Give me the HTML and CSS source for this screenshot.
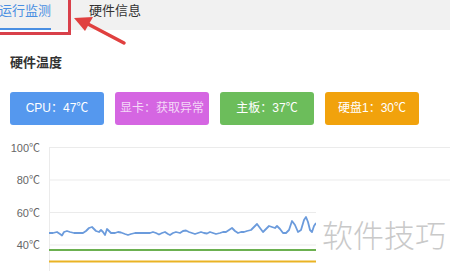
FILE: index.html
```html
<!DOCTYPE html>
<html lang="zh-CN">
<head>
    <meta charset="UTF-8">
    <meta name="viewport" content="width=device-width, initial-scale=1.0">
    <title>运行监测</title>
    <link rel="stylesheet" href="styles.css">
</head>
<body>
    <div class="page">
        <div class="tabs">
            <div class="tab active"><span>运行监测</span></div>
            <div class="tab"><span>硬件信息</span></div>
        </div>

        <div class="mark-box"></div>
        <svg class="mark-arrow" width="140" height="50" viewBox="0 0 140 50">
            <path d="M124 43 L86 23" stroke="#e0403f" stroke-width="3.5" stroke-linecap="round"/>
            <polygon points="74,18 93,17 85,31" fill="#e0403f"/>
        </svg>

        <div class="panel">
            <h2 class="title">硬件温度</h2>
            <div class="badges">
                <div class="badge cpu">CPU：47℃</div>
                <div class="badge gpu">显卡：获取异常</div>
                <div class="badge board">主板：37℃</div>
                <div class="badge disk">硬盘1：30℃</div>
            </div>

            <div class="chart">
                <svg width="450" height="131" viewBox="0 0 450 131">
                    <g class="grid">
                        <line x1="49" y1="7.5" x2="450" y2="7.5"/>
                        <line x1="49" y1="40" x2="450" y2="40"/>
                        <line x1="49" y1="72.5" x2="450" y2="72.5"/>
                        <line x1="49" y1="105" x2="450" y2="105"/>
                        <line x1="49.5" y1="7" x2="49.5" y2="131"/>
                    </g>
                    <g class="axis-labels">
                        <text x="40" y="11.5">100℃</text>
                        <text x="40" y="44">80℃</text>
                        <text x="40" y="76.5">60℃</text>
                        <text x="40" y="109">40℃</text>
                    </g>
                    <polyline class="line-cpu" points="49,93 53,93 57,92 60,94 62,95.5 64,92 67,91 70,92 74,93 78,93 83,93 86,91 89,88 92,87 94,89 96,91 99,92 101,90 103,92 105,95 107,89 109,91 111,93 115,93 118,92 121,92.5 125,94 128,95 131,94 135,93 140,93 145,93 150,93 153,92 156,93 159,94.5 162,93 165,92 168,94 170,95 173,93 176,92 180,93 183,91 186,90.5 189,92 192,93 195,94 198,93 201,92 204,93 207,93.5 210,92 213,93 216,94 220,93 223,92 226,92 229,90 232,88 235,91 238,93 241,92 244,92 247,91 251,90 254,87 257,84 260,88 263,92 266,89 269,86 272,87 275,88 277,86 280,89 283,93 286,93 289,90 292,81 295,85 298,92 301,90 304,80 306,77 308,82 310,90 312,92 314,86 316,83"/>
                    <line class="line-board" x1="49" y1="110" x2="316" y2="110"/>
                    <line class="line-disk" x1="49" y1="121.5" x2="316" y2="121.5"/>
                </svg>
                <div class="watermark">软件技巧</div>
            </div>
        </div>
    </div>
</body>
</html>
```

FILE: styles.css
```css
* {
    margin: 0;
    padding: 0;
    box-sizing: border-box;
}

body {
    font-family: "Liberation Sans", "Noto Sans CJK SC", sans-serif;
    background: #fff;
    color: #333;
    overflow: hidden;
}

.page {
    position: relative;
    width: 450px;
    height: 271px;
    overflow: hidden;
}

.tabs {
    display: flex;
    height: 30px;
    background: #f1f1f1;
    margin-left: -20px;
    padding-left: 0;
}

.tab {
    padding: 0 19px;
    font-size: 13px;
    color: #333;
}

.tab span {
    display: block;
    height: 30px;
    line-height: 21px;
    border-bottom: 2px solid transparent;
}

.tab.active span {
    color: #4a8fe2;
    border-bottom-color: #4a8fe2;
}

/* annotation drawn over the screenshot */
.mark-box {
    position: absolute;
    left: -20px;
    top: -20px;
    width: 91px;
    height: 55px;
    border: 3px solid #d9404a;
}

.mark-arrow {
    position: absolute;
    left: 0;
    top: 0;
}

.panel {
    padding-top: 24px;
}

.title {
    padding-left: 10px;
    font-size: 13px;
    font-weight: 600;
    line-height: 18px;
    color: #333;
}

.badges {
    display: flex;
    gap: 11px;
    margin-top: 20px;
    padding-left: 10px;
}

.badge {
    width: 94px;
    height: 33px;
    line-height: 33px;
    border-radius: 3px;
    text-align: center;
    font-size: 12px;
    color: #fff;
}

.badge.cpu { background: #5598ee; }
.badge.gpu { background: #d566e2; color: rgba(255,255,255,0.75); }
.badge.board { background: #6cbd5b; }
.badge.disk { background: #f1a20c; }

.chart {
    position: relative;
    margin-top: 15px;
    height: 131px;
}

.chart svg {
    display: block;
}

.grid line {
    stroke: #ebebeb;
    stroke-width: 1;
}

.axis-labels text {
    font-family: "Liberation Sans", sans-serif;
    font-size: 11px;
    fill: #666;
    text-anchor: end;
}

.line-cpu {
    fill: none;
    stroke: #6b9bdc;
    stroke-width: 1.8;
    stroke-linejoin: round;
}

.line-board {
    stroke: #6cb050;
    stroke-width: 2;
}

.line-disk {
    stroke: #eab324;
    stroke-width: 2;
}

.watermark {
    position: absolute;
    left: 316px;
    top: 56px;
    right: 0;
    bottom: 0;
    background: #fff;
    padding: 22px 0 0 6px;
    font-family: "Noto Sans CJK SC", sans-serif;
    font-size: 31px;
    line-height: 31px;
    font-weight: 300;
    color: #c9c9c9;
    white-space: nowrap;
}
```
